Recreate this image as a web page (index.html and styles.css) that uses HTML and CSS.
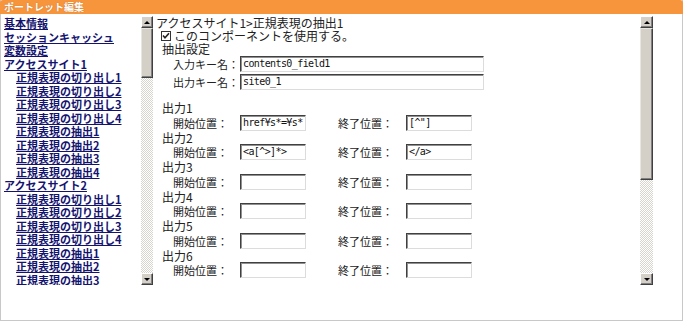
FILE: index.html
```html
<!DOCTYPE html>
<html lang="ja">
<head>
<meta charset="utf-8">
<title>ポートレット編集</title>
<link rel="stylesheet" href="styles.css">
</head>
<body>
<div class="portlet">
  <div class="header">ポートレット編集</div>
  <div class="main">
    <div class="nav">
      <ul class="nav-list">
        <li><a href="#">基本情報</a></li>
        <li><a href="#">セッションキャッシュ</a></li>
        <li><a href="#">変数設定</a></li>
        <li><a href="#">アクセスサイト1</a></li>
        <li class="sub"><a href="#">正規表現の切り出し1</a></li>
        <li class="sub"><a href="#">正規表現の切り出し2</a></li>
        <li class="sub"><a href="#">正規表現の切り出し3</a></li>
        <li class="sub"><a href="#">正規表現の切り出し4</a></li>
        <li class="sub"><a href="#">正規表現の抽出1</a></li>
        <li class="sub"><a href="#">正規表現の抽出2</a></li>
        <li class="sub"><a href="#">正規表現の抽出3</a></li>
        <li class="sub"><a href="#">正規表現の抽出4</a></li>
        <li><a href="#">アクセスサイト2</a></li>
        <li class="sub"><a href="#">正規表現の切り出し1</a></li>
        <li class="sub"><a href="#">正規表現の切り出し2</a></li>
        <li class="sub"><a href="#">正規表現の切り出し3</a></li>
        <li class="sub"><a href="#">正規表現の切り出し4</a></li>
        <li class="sub"><a href="#">正規表現の抽出1</a></li>
        <li class="sub"><a href="#">正規表現の抽出2</a></li>
        <li class="sub"><a href="#">正規表現の抽出3</a></li>
      </ul>
      <div class="sb sb-left">
        <div class="sb-btn"><span class="tri-up"></span></div>
        <div class="sb-thumb thumb-left"></div>
        <div class="sb-track"></div>
        <div class="sb-btn"><span class="tri-down"></span></div>
      </div>
    </div>
    <div class="frame">
      <div class="content">
        <div class="title">アクセスサイト1&gt;正規表現の抽出1</div>
        <div class="check-line"><span class="checkbox"><svg width="8" height="8" viewBox="0 0 8 8"><path d="M1 3.5 L3 5.8 L7 1.2" fill="none" stroke="#222" stroke-width="1.6"/></svg></span>このコンポーネントを使用する。</div>
        <div class="section">抽出設定</div>
        <div class="key-row"><span class="key-label">入力キー名：</span><span class="field wide">contents0_field1</span></div>
        <div class="key-row"><span class="key-label">出力キー名：</span><span class="field wide">site0_1</span></div>
        <div class="outputs">
          <div class="out-label">出力1</div>
          <div class="pos-row"><span class="pos-label">開始位置：</span><span class="field short">href¥s*=¥s*</span><span class="pos-label end">終了位置：</span><span class="field short">[^"]</span></div>
          <div class="out-label">出力2</div>
          <div class="pos-row"><span class="pos-label">開始位置：</span><span class="field short">&lt;a[^&gt;]*&gt;</span><span class="pos-label end">終了位置：</span><span class="field short">&lt;/a&gt;</span></div>
          <div class="out-label">出力3</div>
          <div class="pos-row"><span class="pos-label">開始位置：</span><span class="field short"></span><span class="pos-label end">終了位置：</span><span class="field short"></span></div>
          <div class="out-label">出力4</div>
          <div class="pos-row"><span class="pos-label">開始位置：</span><span class="field short"></span><span class="pos-label end">終了位置：</span><span class="field short"></span></div>
          <div class="out-label">出力5</div>
          <div class="pos-row"><span class="pos-label">開始位置：</span><span class="field short"></span><span class="pos-label end">終了位置：</span><span class="field short"></span></div>
          <div class="out-label">出力6</div>
          <div class="pos-row"><span class="pos-label">開始位置：</span><span class="field short"></span><span class="pos-label end">終了位置：</span><span class="field short"></span></div>
        </div>
      </div>
      <div class="sb sb-right">
        <div class="sb-btn"><span class="tri-up"></span></div>
        <div class="sb-thumb thumb-right"></div>
        <div class="sb-track"></div>
        <div class="sb-btn"><span class="tri-down"></span></div>
      </div>
    </div>
  </div>
</div>
</body>
</html>
```
FILE: styles.css
```css
* { box-sizing: border-box; }
html, body { margin: 0; padding: 0; background: #fff; }
body {
  font-family: "Noto Sans CJK JP", "DejaVu Sans", sans-serif;
  color: #222;
  width: 683px;
  height: 322px;
  overflow: hidden;
}
.portlet {
  width: 683px;
  height: 321px;
  border: 1px solid #c8c8c8;
  border-top: none;
}
.header {
  height: 14px;
  margin: 0 -1px;
  background: #f7953c;
  border-radius: 3px 3px 0 0;
  color: #fff;
  font-size: 10px;
  font-weight: bold;
  line-height: 13px;
  padding-left: 4px;
  text-shadow: 0 0 1px #b0601c;
}
.main {
  display: flex;
  height: 271px;
  padding-top: 2px;
}
.nav {
  display: flex;
  width: 153px;
  height: 269px;
}
.nav-list {
  list-style: none;
  margin: 0;
  padding: 1px 0 0 3px;
  width: 140px;
  overflow: hidden;
  font-size: 11px;
  font-weight: bold;
  line-height: 13.5px;
  white-space: nowrap;
}
.nav-list li.sub { padding-left: 12px; }
.nav-list a {
  color: #141470;
  text-decoration: underline;
}
.sb {
  display: flex;
  flex-direction: column;
  height: 269px;
}
.sb-left { width: 12px; }
.sb-right { width: 13px; }
.sb-btn {
  height: 12px;
  flex: none;
  background: #d4d0c8;
  border: 1px solid;
  border-color: #fff #404040 #404040 #fff;
  box-shadow: inset -1px -1px #808080;
  display: flex;
  align-items: center;
  justify-content: center;
}
.tri-up, .tri-down {
  width: 0; height: 0;
  border-left: 3px solid transparent;
  border-right: 3px solid transparent;
}
.tri-up { border-bottom: 3px solid #000; }
.tri-down { border-top: 3px solid #000; }
.sb-thumb {
  flex: none;
  background: #d4d0c8;
  border: 1px solid;
  border-color: #e8e6e0 #404040 #404040 #e8e6e0;
  box-shadow: inset -1px -1px #808080;
}
.thumb-left { height: 50px; }
.thumb-right { height: 152px; }
.sb-track {
  flex: 1;
  background: repeating-conic-gradient(#d8d5ce 0 25%, #fff 0 50%) 0 0 / 2px 2px;
}
.frame {
  display: flex;
  margin-left: 1px;
  width: 498px;
}
.content {
  width: 485px;
  height: 269px;
  overflow: hidden;
  font-size: 12px;
  white-space: nowrap;
}
.title {
  line-height: 13px;
  height: 13px;
  padding-left: 1px;
}
.check-line {
  display: flex;
  align-items: center;
  height: 13px;
  padding-left: 6px;
  line-height: 13px;
}
.checkbox {
  width: 10px;
  height: 10px;
  border: 1px solid #333;
  background: #fff;
  margin-right: 3px;
  display: flex;
  align-items: center;
  justify-content: center;
}
.section {
  height: 13px;
  line-height: 13px;
  padding-left: 7px;
}
.key-row {
  display: flex;
  align-items: center;
  height: 18px;
  padding-left: 18px;
}
.key-row:first-of-type { margin-top: 3px; }
.key-label, .pos-label { width: 67px; flex: none; font-size: 11px; }
.field {
  display: block;
  flex: none;
  height: 16px;
  border: 1px solid;
  border-color: #404040 #dcdcdc #dcdcdc #404040;
  box-shadow: inset 1px 1px #909090;
  background: #fff;
  font-family: "DejaVu Sans Mono", "Liberation Mono", monospace;
  font-size: 10px;
  letter-spacing: -0.6px;
  line-height: 14px;
  padding-left: 2px;
  color: #111;
  overflow: hidden;
}
.wide { width: 244px; }
.short { width: 66px; }
.outputs { margin-top: 10px; }
.out-label {
  height: 13.5px;
  line-height: 13.5px;
  padding-left: 7px;
}
.pos-row {
  display: flex;
  align-items: center;
  height: 16px;
  padding-left: 18px;
}
.pos-label.end { width: 68px; margin-left: 32px; }
```
